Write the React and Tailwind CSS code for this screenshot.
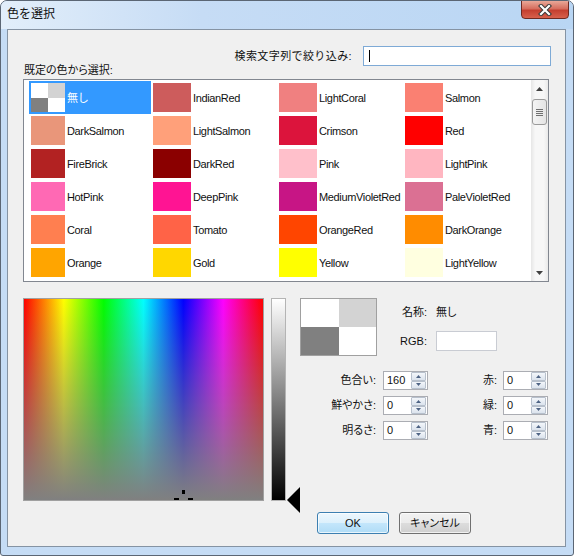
import React from "react";

const COLORS = [
  { name: "無し", none: true },
  { name: "IndianRed", hex: "#cd5c5c" },
  { name: "LightCoral", hex: "#f08080" },
  { name: "Salmon", hex: "#fa8072" },
  { name: "DarkSalmon", hex: "#e9967a" },
  { name: "LightSalmon", hex: "#ffa07a" },
  { name: "Crimson", hex: "#dc143c" },
  { name: "Red", hex: "#ff0000" },
  { name: "FireBrick", hex: "#b22222" },
  { name: "DarkRed", hex: "#8b0000" },
  { name: "Pink", hex: "#ffc0cb" },
  { name: "LightPink", hex: "#ffb6c1" },
  { name: "HotPink", hex: "#ff69b4" },
  { name: "DeepPink", hex: "#ff1493" },
  { name: "MediumVioletRed", hex: "#c71585" },
  { name: "PaleVioletRed", hex: "#db7093" },
  { name: "Coral", hex: "#ff7f50" },
  { name: "Tomato", hex: "#ff6347" },
  { name: "OrangeRed", hex: "#ff4500" },
  { name: "DarkOrange", hex: "#ff8c00" },
  { name: "Orange", hex: "#ffa500" },
  { name: "Gold", hex: "#ffd700" },
  { name: "Yellow", hex: "#ffff00" },
  { name: "LightYellow", hex: "#ffffe0" },
];

// 無し = transparent, drawn as a 2x2 checker
const Checker = ({ className }) => (
  <div className={`grid grid-cols-2 grid-rows-2 ${className}`}>
    <div className="bg-white" />
    <div className="bg-[#d3d3d3]" />
    <div className="bg-[#808080]" />
    <div className="bg-white" />
  </div>
);

const ColorItem = ({ item, first }) => {
  const selected = item.none;
  return (
    <div className={`h-[33px] p-[2px] flex items-center ${selected ? "bg-[#3399ff] text-white" : ""}`}>
      {item.none ? (
        <Checker className="w-[34px] h-[29px] shrink-0" />
      ) : (
        <div
          className={`${first ? "w-[34px]" : "w-[38px]"} h-[29px] shrink-0`}
          style={{ backgroundColor: item.hex }}
        />
      )}
      <span className="ml-[2px] mt-[2px] whitespace-nowrap tracking-[-0.35px]">{item.name}</span>
    </div>
  );
};

const ScrollBar = () => (
  <div className="w-[17px] h-full flex flex-col bg-[linear-gradient(to_right,#e6e6e6,#f7f7f7_25%,#f7f7f7_75%,#e9e9e9)]">
    <div className="h-[17px] flex items-center justify-center">
      <svg width="7" height="4" viewBox="0 0 7 4">
        <polygon points="3.5,0 7,4 0,4" fill="#404040" />
      </svg>
    </div>
    <div className="mt-[2px] mx-[1px] h-[26px] rounded-[3px] border border-[#9a9a9a] bg-[linear-gradient(to_right,#f4f4f4,#e4e4e4)] flex flex-col items-center justify-center gap-[1px]">
      <div className="w-[7px] h-[1px] bg-[#6f6f6f]" />
      <div className="w-[7px] h-[1px] bg-[#6f6f6f]" />
      <div className="w-[7px] h-[1px] bg-[#6f6f6f]" />
      <div className="w-[7px] h-[1px] bg-[#6f6f6f]" />
    </div>
    <div className="flex-1" />
    <div className="h-[17px] flex items-center justify-center">
      <svg width="7" height="4" viewBox="0 0 7 4">
        <polygon points="0,0 7,0 3.5,4" fill="#404040" />
      </svg>
    </div>
  </div>
);

const SpinBtn = ({ up }) => (
  <div className="flex-1 rounded-[1px] border border-[#b7c0cc] bg-[linear-gradient(to_bottom,#f3f6fa,#dbe3ed)] flex items-center justify-center">
    <svg width="5" height="3" viewBox="0 0 5 3">
      <polygon points={up ? "2.5,0 5,3 0,3" : "0,0 5,0 2.5,3"} fill="#4e6384" />
    </svg>
  </div>
);

const SpinBox = ({ value }) => (
  <div className="w-[45px] h-[19px] bg-white border border-[#abadb3] flex items-center">
    <span className="flex-1 pl-[3px] leading-none">{value}</span>
    <div className="w-[15px] h-[17px] mr-[1px] flex flex-col">
      <SpinBtn up />
      <SpinBtn />
    </div>
  </div>
);

const SpinRow = ({ label, value, rightLabel }) => (
  <div className="h-[19px] flex items-center">
    <span className="w-[76px] text-right">{label}</span>
    <div className="ml-[7px]">
      <SpinBox value={value} />
    </div>
    <span className="w-[69px] text-right">{rightLabel}</span>
    <div className="ml-[6px]">
      <SpinBox value="0" />
    </div>
  </div>
);

export default function App() {
  return (
    <div className="w-[574px] h-[556px] flex flex-col bg-[#c5dcf5] border border-[#5b6674] rounded-t-[7px] rounded-b-[3px] overflow-hidden font-['Liberation_Sans','Noto_Sans_CJK_JP',sans-serif] text-[#111]">
      {/* title bar */}
      <div className="h-[28px] shrink-0 flex items-start bg-[linear-gradient(to_right,#e2eefa,#c6dcf5_35%,#b9d6f4)]">
        <span className="ml-[6px] mt-[6px] text-[12px] leading-[14px]">色を選択</span>
        <div className="ml-auto mr-[4px] w-[48px] h-[19px] -mt-[1px] rounded-b-[4px] border border-[#6e2a22] bg-[linear-gradient(to_bottom,#e9a898,#d66e5e_45%,#c43f30_55%,#d7604c)] flex items-center justify-center">
          <svg width="14" height="12" viewBox="0 0 14 12">
            <path d="M3 2 L11 10 M11 2 L3 10" stroke="#3a3a3a" strokeWidth="4.2" strokeLinecap="square" />
            <path d="M3 2 L11 10 M11 2 L3 10" stroke="#ffffff" strokeWidth="2.2" strokeLinecap="square" />
          </svg>
        </div>
      </div>

      {/* client area */}
      <div className="ml-[6px] mr-[7px] mb-[8px] flex-1 border border-[#8593a3] bg-[#f0f0f0] px-[15px] text-[11px]">
        <div className="mt-[16px] h-[20px] flex items-center justify-end -mr-[1px]">
          <span className="tracking-[0.4px]">検索文字列で絞り込み:</span>
          <div className="ml-[11px] w-[188px] h-[20px] bg-white border border-[#7eaad6] flex items-center">
            <div className="ml-[5px] w-[1px] h-[12px] bg-black" />
          </div>
        </div>
        <div className="-mt-[4px] h-[16px] leading-[16px] pl-[1px] [font-feature-settings:'palt']">既定の色から選択:</div>

        {/* preset list */}
        <div className="mt-[1px] w-[526px] h-[203px] bg-white border border-[#828790] flex">
          <div className="flex-1 pl-[5px] pt-[1px]">
            <div className="grid grid-cols-[122px_126px_126px_126px]">
              {COLORS.map((c, i) => (
                <ColorItem key={c.name} item={c} first={i % 4 === 0} />
              ))}
            </div>
          </div>
          <ScrollBar />
        </div>

        {/* custom colour */}
        <div className="mt-[16px] flex items-start [font-feature-settings:'palt']">
          <div className="relative w-[241px] h-[203px] border border-[#a0a0a0] bg-[linear-gradient(to_bottom,rgba(128,128,128,0),#808080),linear-gradient(to_right,#ff0000,#ffff00,#00ff00,#00ffff,#0000ff,#ff00ff,#ff0000)]">
            <svg className="absolute left-[-1px] top-[-1px]" width="241" height="203">
              <rect x="159" y="192" width="3" height="4" fill="#000" />
              <rect x="151" y="200" width="5" height="2" fill="#000" />
              <rect x="165" y="200" width="5" height="2" fill="#000" />
            </svg>
          </div>
          <div className="ml-[7px] w-[15px] h-[203px] border border-[#b4b4b4] bg-[linear-gradient(to_bottom,#ffffff,#000000)]" />
          <div className="relative w-[14px] h-[203px]">
            <svg className="absolute left-0 top-[189px]" width="14" height="26" viewBox="0 0 14 26">
              <polygon points="1,13 14,0 14,26" fill="#000" />
            </svg>
          </div>

          <div className="flex flex-col">
            <div className="flex">
              <Checker className="w-[77px] h-[58px] border border-[#a0a0a0]" />
              <div className="flex flex-col">
                <div className="mt-[7px] h-[15px] flex items-center">
                  <span className="w-[50px] text-right">名称:</span>
                  <span className="ml-[9px]">無し</span>
                </div>
                <div className="mt-[11px] h-[20px] flex items-center">
                  <span className="w-[50px] text-right">RGB:</span>
                  <div className="ml-[9px] w-[61px] h-[20px] bg-white border border-[#c9ccd3]" />
                </div>
              </div>
            </div>

            <div className="mt-[15px] flex flex-col gap-[6px]">
              <SpinRow label="色合い:" value="160" rightLabel="赤:" />
              <SpinRow label="鮮やかさ:" value="0" rightLabel="緑:" />
              <SpinRow label="明るさ:" value="0" rightLabel="青:" />
            </div>

            <div className="mt-[72px] ml-[17px] flex gap-[10px]">
              <button className="w-[72px] h-[22px] rounded-[3px] border border-[#3c7fb1] bg-[linear-gradient(to_bottom,#edf7fd,#dcf0fc_50%,#c4e6fb_50%,#b0dcf6)] shadow-[inset_0_0_0_1px_rgba(255,255,255,0.7)] text-[11px] text-[#111]">
                OK
              </button>
              <button className="w-[72px] h-[22px] rounded-[3px] border border-[#707070] bg-[linear-gradient(to_bottom,#f2f2f2,#ebebeb_50%,#dddddd_50%,#cfcfcf)] shadow-[inset_0_0_0_1px_rgba(255,255,255,0.7)] text-[11px] text-[#111]">
                キャンセル
              </button>
            </div>
          </div>
        </div>
      </div>
    </div>
  );
}
